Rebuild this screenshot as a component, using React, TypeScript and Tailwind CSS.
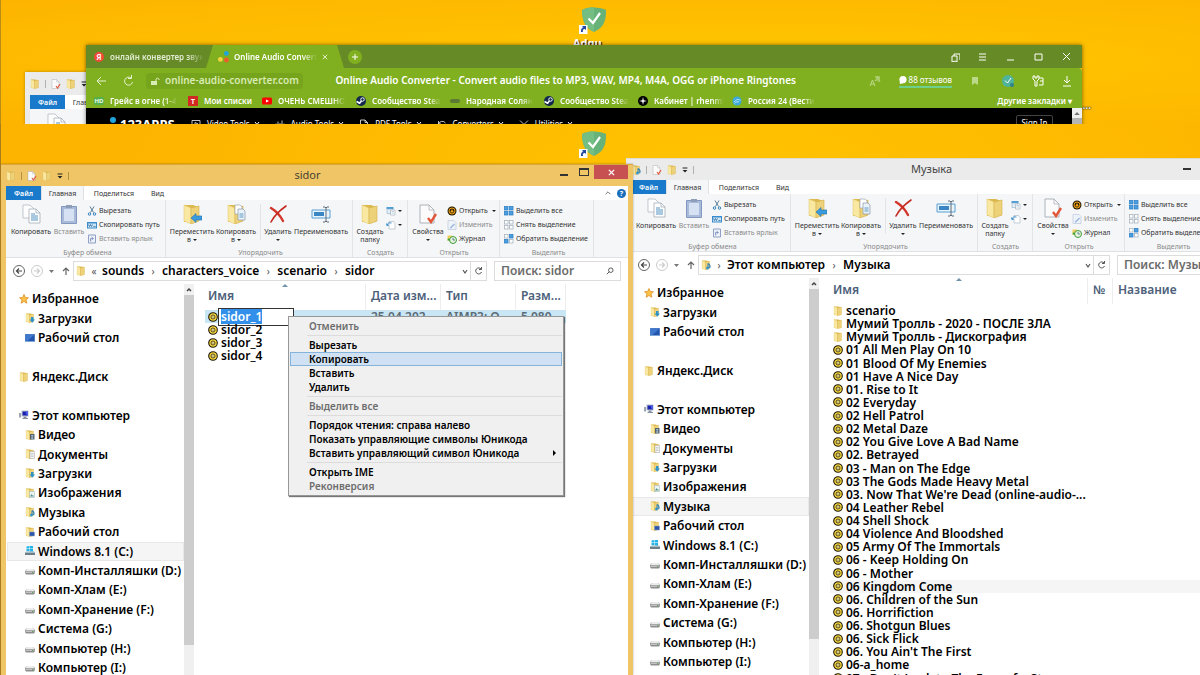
import type { ReactNode } from "react";
import clsx from "clsx";

/* ---------- Icons ---------- */

function Folder({ className = "size-2.5", children }: { className?: string; children?: ReactNode }) {
  return (
    <svg viewBox="0 0 20 20" className={clsx("shrink-0", className)}>
      <path d="M2 1h9l5 2v15H2z" fill="#dcb94f" />
      <path d="M2 1l7 3v16l-7-3z" fill="#f8e8a2" stroke="#e2c567" strokeWidth=".5" />
      <path d="M9 4l8-2v15l-8 3z" fill="#eed27a" stroke="#d3ae45" strokeWidth=".6" />
      {children}
    </svg>
  );
}

function FolderDown() {
  return (
    <Folder>
      <path d="M12 8h5v5h3l-5.500 6.500L9 13h3z" fill="#2f93c8" />
    </Folder>
  );
}

function FolderVideo() {
  return (
    <Folder>
      <path d="M10 8h9v11h-9z" fill="#50616d" />
      <path d="M12.500 10h4v3h-4zM12.500 14.500h4v3h-4z" fill="#a9c8d8" />
    </Folder>
  );
}

function FolderDoc() {
  return (
    <Folder>
      <path d="M10 5h9v14h-9z" fill="#f6f6f6" stroke="#a3a3a3" />
      <path d="M12 9h5M12 12h5M12 15h5" stroke="#9aa4ad" />
    </Folder>
  );
}

function FolderImage() {
  return (
    <Folder>
      <path d="M9 7h10v12H9z" fill="#eaf4f6" stroke="#9eb0b5" />
      <path d="M10 17l3-5 2 3 1-1 2 3z" fill="#5a9a8b" />
    </Folder>
  );
}

function FolderMusic({ className }: { className?: string }) {
  return (
    <Folder className={className}>
      <path d="M14 7c4 2 5 6 3 9" stroke="#2a7fb5" strokeWidth="2.500" fill="none" />
      <circle cx="13" cy="16" r="3" fill="#3b9bd0" />
      <path d="M13 7h2v9h-2z" fill="#2a7fb5" />
    </Folder>
  );
}

function FolderDesktop() {
  return (
    <Folder>
      <path d="M9 10h10v8H9z" fill="#2c57a8" stroke="#8aa3cf" />
    </Folder>
  );
}

function Star() {
  return (
    <svg viewBox="0 0 20 20" className="size-2.5 shrink-0">
      <path
        d="M10 1l2.700 6 6.300.6-4.800 4.300 1.500 6.600L10 15l-5.700 3.500 1.500-6.600L1 7.600 7.300 7z"
        fill="#fbc24a"
        stroke="#dd8a1e"
        strokeWidth="1.500"
      />
    </svg>
  );
}

function Screen() {
  return (
    <svg viewBox="0 0 20 20" className="size-2.5 shrink-0">
      <path d="M0 2h20v16H0z" fill="#7fa4d6" />
      <path d="M1 3h18v13H1z" fill="#2355ae" />
      <path d="M1 3h18L5 16H1z" fill="#3f78cc" />
    </svg>
  );
}

function Computer() {
  return (
    <svg viewBox="0 0 20 20" className="size-2.5 shrink-0">
      <path d="M0 6h4v9H0z" fill="#9ca5b0" />
      <path d="M5 1h14v12H5z" fill="#b6bfcc" />
      <path d="M7 3h11v8H7z" fill="#1a23b0" />
      <path d="M13 3h5v8h-2z" fill="#4e63e6" />
      <path d="M9 13h6v3h3v2H7v-2h2z" fill="#8790a0" />
    </svg>
  );
}

function Drive() {
  return (
    <svg viewBox="0 0 20 20" className="size-2.5 shrink-0">
      <path d="M4 8h12l4 4v4l-2 3H2l-2-3v-4z" fill="#8e8e8e" />
      <path d="M4 8h12l3 4H1z" fill="#ececec" />
      <path d="M1 13h18v3H1z" fill="#c2c2c2" />
      <path d="M14 14h3v1.500h-3z" fill="#4a9a4a" />
    </svg>
  );
}

function WindowsDrive() {
  return (
    <svg viewBox="0 0 20 20" className="size-2.5 shrink-0">
      <path d="M3 1l6-1v5H3zM10 0l6-1v6h-6zM3 6h6v5l-6-1zM10 6h6v6l-6-1z" fill="#22b4e8" />
      <path d="M0 13h20v5H0z" fill="#6c7f88" />
      <path d="M2 11h16l2 3H0z" fill="#a9bcc4" />
    </svg>
  );
}

function Disc() {
  return (
    <svg viewBox="0 0 10 10" className="size-2.5 shrink-0">
      <circle cx="5" cy="5" r="4.300" fill="#f5d63c" stroke="#1f1a08" strokeWidth="1.100" />
      <circle cx="5" cy="5" r="2" fill="#fbf0a0" stroke="#3d320a" strokeWidth=".9" />
      <circle cx="5" cy="5" r=".6" fill="#3d320a" />
    </svg>
  );
}

function CopyIcon({ className = "size-5" }: { className?: string }) {
  return (
    <svg viewBox="0 0 20 20" className={className} strokeWidth=".7">
      <path d="M2 1h7l4 4v9H2z" fill="#fdfdfd" stroke="#aab2bb" />
      <path d="M8 5h7l4 4v10H8z" fill="#fff" stroke="#98a3af" />
      <path d="M10 9h4v2h3v6h-7z" fill="#a8c9df" />
      <path d="M15 5v4h4" fill="none" stroke="#98a3af" />
    </svg>
  );
}

function PasteIcon() {
  return (
    <svg viewBox="0 0 20 20" className="size-5">
      <path d="M2.500 2.500h15v17h-15z" fill="#a9bbd9" stroke="#8398c0" />
      <path d="M5 5h10v12H5z" fill="#d6e2f3" />
      <path d="M7 1h6v3H7z" fill="#8e9db8" />
    </svg>
  );
}

function MoveIcon() {
  return (
    <Folder className="size-5">
      <path d="M9 14l5-4.500V12h6v4h-6v2.500z" fill="#3b9bdc" stroke="#2272ae" strokeWidth=".6" />
    </Folder>
  );
}

function CopyToIcon() {
  return (
    <Folder className="size-5">
      <path d="M9 1h5l2 2v7H9z" fill="#fff" stroke="#9ba6b2" strokeWidth=".7" />
      <path d="M12 5h5l2 2v9h-7z" fill="#eaf3fa" stroke="#8796a6" strokeWidth=".7" />
      <path d="M13.500 9h4v5h-4z" fill="#a4c6de" />
    </Folder>
  );
}

function DeleteIcon() {
  return (
    <svg viewBox="0 0 20 20" className="size-5" fill="none" strokeLinecap="round">
      <path d="M3 4c5 3 9 7 12 13" stroke="#d2362b" strokeWidth="2.400" />
      <path d="M18 2C11 7 6 12 3 18" stroke="#c32a20" strokeWidth="1.600" />
    </svg>
  );
}

function RenameIcon() {
  return (
    <svg viewBox="0 0 20 20" className="size-5" fill="none">
      <path d="M1 6h18v8H1z" fill="#eaf4fb" stroke="#58a0d4" />
      <path d="M3 8h10v4H3z" fill="#3a86c4" />
      <path d="M12 3h2l1 1 1-1h2M15 4v13M12 18h2l1-1 1 1h2" stroke="#5f6b76" />
    </svg>
  );
}

function PropertiesIcon({ className = "size-5" }: { className?: string }) {
  return (
    <svg viewBox="0 0 20 20" className={className}>
      <path d="M2 1h9l5 5v13H2z" fill="#fbfbfb" stroke="#9aa1a9" strokeWidth=".8" />
      <path d="M11 1v5h5" fill="none" stroke="#adb3ba" strokeWidth=".8" />
      <path d="M10 14l3 4 5-8" fill="none" stroke="#e0573a" strokeWidth="2.400" />
    </svg>
  );
}

function Scissors() {
  return (
    <svg viewBox="0 0 20 20" className="size-2.5" fill="none" stroke="#2f83bd" strokeWidth="2">
      <path d="M6 1l7 12M14 1L7 13" stroke="#5d7e96" />
      <circle cx="5" cy="16" r="2.500" />
      <circle cx="15" cy="16" r="2.500" />
    </svg>
  );
}

function PathIcon() {
  return (
    <svg viewBox="0 0 20 20" className="size-2.5">
      <path d="M0 4h20v13H0z" fill="#3a8ccd" />
      <path d="M2 7h16v8H2z" fill="#cfe6f7" />
      <path d="M3 9l2 4 2-4 2 4 2-4M13 13h4" stroke="#1f6099" strokeWidth="1.500" fill="none" />
    </svg>
  );
}

function ShortcutIcon() {
  return (
    <svg viewBox="0 0 20 20" className="size-2.5">
      <path d="M3 2h14v16H3z" fill="#eef2f8" stroke="#8fa0c4" strokeWidth="2" />
      <path d="M7 15V9h5M9 6l4 3-4 3" fill="none" stroke="#6d84b8" strokeWidth="1.500" />
    </svg>
  );
}

function NewItemIcon() {
  return (
    <svg viewBox="0 0 20 20" className="size-2.5">
      <path d="M1 2h14v4H1z" fill="#4d9fd6" />
      <path d="M2 6h12v9H2z" fill="#e3eef6" stroke="#7fa6c2" />
      <path d="M9 8h9v10H9z" fill="#fff" stroke="#8b9aa8" />
      <path d="M11 11h5M11 14h5" stroke="#7fa6c2" />
    </svg>
  );
}

function EasyAccessIcon() {
  return (
    <svg viewBox="0 0 20 20" className="size-2.5">
      <path d="M6 3h9l3 4v11H6z" fill="#fff" stroke="#93a1ae" />
      <path d="M2 11c0-5 5-6 9-5M2 11l-1-4M2 11l4-1" fill="none" stroke="#3b8fce" strokeWidth="2" />
    </svg>
  );
}

function OpenIcon() {
  return (
    <svg viewBox="0 0 20 20" className="size-2.5">
      <circle cx="10" cy="10" r="9" fill="#2d2005" />
      <circle cx="10" cy="10" r="6" fill="none" stroke="#f0a21a" strokeWidth="2" />
      <path d="M10 6l4 7H6z" fill="#f0a21a" />
    </svg>
  );
}

function EditIcon() {
  return (
    <svg viewBox="0 0 20 20" className="size-2.5">
      <path d="M2 1h12l4 4v14H2z" fill="#eef3fa" stroke="#a6b6d2" />
      <path d="M6 15l8-8 2 2-8 8H6z" fill="#9ab4dc" />
    </svg>
  );
}

function HistoryIcon() {
  return (
    <svg viewBox="0 0 20 20" className="size-2.5">
      <path d="M1 3h9v10H1z" fill="#f0cf5c" />
      <circle cx="12" cy="12" r="7" fill="#e7f4df" stroke="#3f9b3a" strokeWidth="2" />
      <path d="M12 8v4h4" stroke="#35607c" strokeWidth="1.500" fill="none" />
      <path d="M2 8l5 5H1z" fill="#3fa535" />
    </svg>
  );
}

function SelectIcon({ kind }: { kind: "all" | "none" | "invert" }) {
  const on = "fill-[#4a9fe0] stroke-[#2d7fc3]";
  const off = "fill-white stroke-[#a4b1bd]";
  const [a, b, c, d] = { all: [on, on, on, on], none: [off, off, off, off], invert: [off, on, on, off] }[kind];
  return (
    <svg viewBox="0 0 20 20" className="size-2.5" strokeWidth="1.500">
      <rect x="1" y="1" width="7" height="7" className={a} />
      <rect x="11" y="1" width="7" height="7" className={b} />
      <rect x="1" y="11" width="7" height="7" className={c} />
      <rect x="11" y="11" width="7" height="7" className={d} />
    </svg>
  );
}

function Caret() {
  return (
    <svg viewBox="0 0 8 4" className="inline-block h-0.5 w-1 shrink-0">
      <path d="M0 0h8L4 4z" fill="#222" />
    </svg>
  );
}

function AdguardIcon() {
  return (
    <svg viewBox="0 0 28 28" className="size-7">
      <path d="M3 3c4-2 7-2.500 12-2.500S24 1.500 27 3c.5 11-3 18-12 22C6 21 3 13 3 3z" fill="#67b279" />
      <path d="M3 3c4-2 7-2.500 12-2.500V25C6 21 3 13 3 3z" fill="#74bd83" />
      <path d="M9.500 11.500l4.500 4.500 7-10" fill="none" stroke="#fff" strokeWidth="2.200" />
      <path d="M0 18h8.500v9H0z" fill="#fff" />
      <path d="M2 25c-.5-3 1-4.500 3-4.500H3.500V19H7v4l-1.200-1C4 22 3.500 23 4 25z" fill="#234a9c" />
    </svg>
  );
}

/* ---------- Explorer ---------- */

type NavItem = { icon: ReactNode; label: string; root?: boolean; spaced?: boolean };

const navItems: NavItem[] = [
  { icon: <Star />, label: "Избранное", root: true },
  { icon: <FolderDown />, label: "Загрузки" },
  { icon: <Screen />, label: "Рабочий стол" },
  { icon: <Folder />, label: "Яндекс.Диск", root: true, spaced: true },
  { icon: <Computer />, label: "Этот компьютер", root: true, spaced: true },
  { icon: <FolderVideo />, label: "Видео" },
  { icon: <FolderDoc />, label: "Документы" },
  { icon: <FolderDown />, label: "Загрузки" },
  { icon: <FolderImage />, label: "Изображения" },
  { icon: <FolderMusic />, label: "Музыка" },
  { icon: <FolderDesktop />, label: "Рабочий стол" },
  { icon: <WindowsDrive />, label: "Windows 8.1 (C:)" },
  { icon: <Drive />, label: "Комп-Инсталляшки (D:)" },
  { icon: <Drive />, label: "Комп-Хлам (E:)" },
  { icon: <Drive />, label: "Комп-Хранение (F:)" },
  { icon: <Drive />, label: "Система (G:)" },
  { icon: <Drive />, label: "Компьютер (H:)" },
  { icon: <Drive />, label: "Компьютер (I:)" },
];

function QuickAccess({ icon }: { icon: ReactNode }) {
  return (
    <div className="flex shrink-0 items-center gap-[5px]">
      {icon}
      <span className="h-2 w-px bg-black/25" />
      <PropertiesIcon className="size-2.5" />
      <Folder />
      <svg viewBox="0 0 10 10" className="size-1.5">
        <path d="M1 1h8v1.500H1zM1 5h8L5 9z" fill="#222" />
      </svg>
      <span className="h-2 w-px bg-black/25" />
    </div>
  );
}

function BigButton({
  icon,
  label,
  second,
  caret,
  disabled,
  width,
}: {
  icon: ReactNode;
  label: string;
  second?: string;
  caret?: boolean;
  disabled?: boolean;
  width: string;
}) {
  return (
    <button
      disabled={disabled}
      className={clsx(
        "flex flex-col items-center text-[7px] leading-2 whitespace-nowrap",
        width,
        disabled ? "text-[#8b8b8b]" : "text-[#333]",
      )}
    >
      {icon}
      <span className="mt-1">{label}</span>
      {(second || caret) && (
        <span className="flex h-2 items-center gap-0.5">
          {second}
          {caret && <Caret />}
        </span>
      )}
    </button>
  );
}

function SmallButton({ icon, label, caret, disabled }: { icon: ReactNode; label: string; caret?: boolean; disabled?: boolean }) {
  return (
    <button
      disabled={disabled}
      className={clsx("flex h-3.5 items-center gap-0.5 text-[7px] whitespace-nowrap", disabled ? "text-[#8b8b8b]" : "text-[#333]")}
    >
      {icon}
      {label}
      {caret && <span className="ml-0.5 flex"><Caret /></span>}
    </button>
  );
}

function RibbonGroup({ label, className, children }: { label: string; className: string; children: ReactNode }) {
  return (
    <section className={clsx("flex shrink-0 flex-col border-r border-[#e2e4e7] pt-1", className)}>
      <div className="flex flex-1 items-start">{children}</div>
      <h3 className="text-center text-[7px] leading-2 text-[#8a8a8a]">{label}</h3>
    </section>
  );
}

function Ribbon() {
  return (
    <div className="flex h-[58px] shrink-0 border-b border-[#dfe1e4] bg-[#f5f6f8]">
      <RibbonGroup label="Буфер обмена" className="w-[160px] pl-1">
        <BigButton icon={<CopyIcon />} label="Копировать" width="w-[42px]" />
        <BigButton icon={<PasteIcon />} label="Вставить" width="w-[34px]" disabled />
        <div className="ml-px">
          <SmallButton icon={<Scissors />} label="Вырезать" />
          <SmallButton icon={<PathIcon />} label="Скопировать путь" />
          <SmallButton icon={<ShortcutIcon />} label="Вставить ярлык" disabled />
        </div>
      </RibbonGroup>
      <RibbonGroup label="Упорядочить" className="w-[187px] pl-[3px]">
        <BigButton icon={<MoveIcon />} label="Переместить" second="в" width="w-[46px]" caret />
        <BigButton icon={<CopyToIcon />} label="Копировать" second="в" width="w-[42px]" caret />
        <span className="mx-[3px] h-9 w-px bg-[#e2e4e7]" />
        <BigButton icon={<DeleteIcon />} label="Удалить" width="w-[28px]" caret />
        <BigButton icon={<RenameIcon />} label="Переименовать" width="w-[58px]" />
      </RibbonGroup>
      <RibbonGroup label="Создать" className="w-[55px] pl-px">
        <BigButton icon={<Folder className="size-5" />} label="Создать" second="папку" width="w-[32px]" />
        <div>
          <button aria-label="Создать элемент" className="flex h-3.5 items-center gap-0.5">
            <NewItemIcon />
            <Caret />
          </button>
          <button aria-label="Простой доступ" className="flex h-3.5 items-center gap-0.5">
            <EasyAccessIcon />
            <Caret />
          </button>
        </div>
      </RibbonGroup>
      <RibbonGroup label="Открыть" className="w-[92px] pl-px">
        <BigButton icon={<PropertiesIcon />} label="Свойства" width="w-[38px]" caret />
        <div>
          <SmallButton icon={<OpenIcon />} label="Открыть" caret />
          <SmallButton icon={<EditIcon />} label="Изменить" disabled />
          <SmallButton icon={<HistoryIcon />} label="Журнал" />
        </div>
      </RibbonGroup>
      <RibbonGroup label="Выделить" className="w-[94px] pl-1">
        <div>
          <SmallButton icon={<SelectIcon kind="all" />} label="Выделить все" />
          <SmallButton icon={<SelectIcon kind="none" />} label="Снять выделение" />
          <SmallButton icon={<SelectIcon kind="invert" />} label="Обратить выделение" />
        </div>
      </RibbonGroup>
    </div>
  );
}

function RibbonTabs() {
  return (
    <nav className="flex h-3.5 shrink-0 items-stretch bg-white text-[7px] text-[#333]">
      <button className="w-[35px] bg-[#1979ca] pt-0.5 font-semibold text-white">Файл</button>
      <button className="w-[43px] border-x border-[#dfe1e4] bg-[#f5f6f8] pt-0.5">Главная</button>
      <button className="w-[60px] pt-0.5">Поделиться</button>
      <button className="w-[27px] pt-0.5">Вид</button>
      <div className="ml-auto flex items-center gap-1.5 pr-0.5">
        <svg viewBox="0 0 10 10" className="size-1.5" fill="none" stroke="#666" strokeWidth="1.500">
          <path d="M1 7l4-4 4 4" />
        </svg>
        <button aria-label="Справка" className="size-[9px] rounded-full bg-[#1c6fbd] text-[7px] leading-[9px] font-bold text-white">
          ?
        </button>
      </div>
    </nav>
  );
}

function AddressBar({ icon, prefix, path, search }: { icon: ReactNode; prefix: string; path: string[]; search: string }) {
  return (
    <div className="flex h-[26px] shrink-0 items-center bg-white pl-1.5">
      <svg viewBox="0 0 60 14" className="h-3.5 w-[60px] shrink-0" fill="none">
        <circle cx="7" cy="7" r="5.500" stroke="#666" />
        <path d="M10 7H4.500M7 4.500L4.500 7 7 9.500" stroke="#444" strokeWidth="1.200" />
        <circle cx="25" cy="7" r="5.500" stroke="#ccc" />
        <path d="M22 7h5.500M25 4.500L27.500 7 25 9.500" stroke="#ccc" strokeWidth="1.200" />
        <path d="M37 6h5l-2.500 3z" fill="#777" />
        <path d="M54 11V4M51 7l3-3 3 3" stroke="#666" strokeWidth="1.200" />
      </svg>
      <div className="ml-px flex h-5 min-w-0 flex-1 items-center border border-[#dcdcdc] pl-0.5 text-[12px] font-semibold">
        {icon}
        <span className="w-4 text-center text-[10px] font-normal text-[#555]">{prefix}</span>
        {path.map((part, i) => (
          <span key={part} className="flex items-center">
            {i > 0 && <span className="w-[18px] text-center text-[10px] font-normal text-[#555]">›</span>}
            <button>{part}</button>
          </span>
        ))}
        <svg viewBox="0 0 24 18" className="ml-auto h-[18px] w-6" fill="none" stroke="#555">
          <path d="M1 8l2 3 2-3" strokeWidth="1.200" />
          <path d="M8.500 0v18" stroke="#dcdcdc" />
          <path d="M19 7a3 3 0 1 0 .5 3M19.500 5v2.500H17" />
        </svg>
      </div>
      <label className="mx-[7px] flex h-5 w-[127px] shrink-0 items-center border border-[#dcdcdc] px-1.5">
        <input placeholder={search} className="w-full min-w-0 text-[12px] font-semibold outline-none placeholder:text-[#6b6b6b]" />
        <svg viewBox="0 0 10 10" className="size-2 shrink-0" fill="none" stroke="#555" strokeWidth="1.200">
          <circle cx="6" cy="4" r="2.800" />
          <path d="M4 6L1 9" />
        </svg>
      </label>
    </div>
  );
}

function NavPane({ hovered }: { hovered: string }) {
  return (
    <aside className="flex w-[188px] shrink-0 overflow-hidden">
      <ul className="grid h-[393px] flex-1 auto-rows-fr pt-[5px] pl-px">
        {navItems.map((item, i) => (
          <li key={i} className={clsx("flex items-end", item.spaced && "row-span-2")}>
            <a
              href="#"
              className={clsx(
                "flex w-full items-center gap-[3px] border text-[12px] leading-[17px] font-semibold whitespace-nowrap",
                item.root ? "pl-[11px]" : "pl-[17px]",
                item.label === hovered ? "border-[#e8e8e8] bg-[#f5f5f5]" : "border-transparent",
              )}
            >
              {item.icon}
              {item.label}
            </a>
          </li>
        ))}
      </ul>
      <div className="flex w-2.5 shrink-0 flex-col bg-[#f0f0f0] pt-px">
        <svg viewBox="0 0 10 10" className="size-2.5" fill="none" stroke="#444" strokeWidth="1.500">
          <path d="M3 6l2-2 2 2" />
        </svg>
        <div className="h-[350px] bg-[#cdcdcd]" />
      </div>
    </aside>
  );
}

function ExplorerWindow({
  title,
  active,
  className,
  icon,
  prefix,
  path,
  search,
  hovered,
  children,
}: {
  title: string;
  active?: boolean;
  className: string;
  icon: ReactNode;
  prefix: string;
  path: string[];
  search: string;
  hovered: string;
  children: ReactNode;
}) {
  return (
    <article
      className={clsx(
        "absolute bottom-0 flex flex-col px-[5px]",
        active ? "border-t border-[#d9a83c] bg-[#efc565] shadow-[0_0_2px_#0005]" : "border-t border-[#e0dccc] bg-[#ebebeb]",
        className,
      )}
    >
      <header className="flex h-[21px] shrink-0 items-center">
        <QuickAccess icon={icon} />
        <h2 className={clsx("flex-1 pr-2 text-center text-[11px]", active ? "text-[#4a4232]" : "text-[#444]")}>{title}</h2>
        <div className="flex self-start">
          <button aria-label="Свернуть" className="flex h-3.5 w-5 items-end justify-center pb-[3px]">
            <span className="h-0.5 w-2 bg-[#333]" />
          </button>
          <button aria-label="Развернуть" className="flex h-3.5 w-5 items-center justify-center">
            <span className="h-2 w-2.5 border border-t-2 border-[#333]" />
          </button>
          <button
            aria-label="Закрыть"
            className={clsx("flex h-3.5 w-[34px] items-center justify-center", active && "bg-[#c75050]")}
          >
            <svg viewBox="0 0 8 8" className="size-[7px]" stroke={active ? "#fff" : "#333"} strokeWidth="1.500">
              <path d="M1 1l6 6M7 1L1 7" />
            </svg>
          </button>
        </div>
      </header>
      <RibbonTabs />
      <Ribbon />
      <AddressBar icon={icon} prefix={prefix} path={path} search={search} />
      <div className="flex min-h-0 flex-1 overflow-hidden bg-white">
        <NavPane hovered={hovered} />
        <div className="min-w-0 flex-1 overflow-hidden pl-[11px]">{children}</div>
      </div>
    </article>
  );
}

function HeaderCell({ children, sorted }: { children?: ReactNode; sorted?: boolean }) {
  return (
    <th className="relative h-[26px] border-r border-[#ededed] pb-[3px] pl-[5px] text-left font-semibold text-[#4c607a] first:pl-[3px]">
      {children}
      {sorted && (
        <svg viewBox="0 0 6 4" className="absolute top-0 left-1/2 h-1 w-1.5 -translate-x-1/2">
          <path d="M3 0l3 3H0z" fill="#6f93ad" />
        </svg>
      )}
    </th>
  );
}

const sidorFiles = ["sidor_2", "sidor_3", "sidor_4"];

function SidorFiles() {
  return (
    <table className="w-[361px] table-fixed border-separate border-spacing-0 text-[12px] leading-[13px] font-semibold whitespace-nowrap">
      <colgroup>
        <col className="w-[161px]" />
        <col className="w-[75px]" />
        <col className="w-[75px]" />
        <col className="w-[50px]" />
      </colgroup>
      <thead>
        <tr>
          <HeaderCell sorted>Имя</HeaderCell>
          <HeaderCell>Дата изм...</HeaderCell>
          <HeaderCell>Тип</HeaderCell>
          <HeaderCell>Разм...</HeaderCell>
        </tr>
      </thead>
      <tbody>
        <tr className="bg-[#c9e6f5] text-[#5c6b75]">
          <td className="h-[13px] p-0">
            <div className="flex h-[13px] items-center pl-[3px]">
              <Disc />
              <label className="-my-1 flex h-[18px] w-[76px] items-center border border-[#333] bg-white pl-0.5">
                <input
                  aria-label="Имя файла"
                  defaultValue="sidor_1"
                  className="field-sizing-content h-[15px] bg-[#3390ea] text-white outline-none"
                />
              </label>
            </div>
          </td>
          <td className="p-0 pl-[5px]">25.04.202...</td>
          <td className="p-0 pl-[5px]">AIMP3: O...</td>
          <td className="p-0 pl-[5px]">5 080</td>
        </tr>
        {sidorFiles.map((name) => (
          <tr key={name}>
            <td className="p-0">
              <div className="flex h-[13px] items-center gap-[3px] pl-[3px]">
                <Disc />
                {name}
              </div>
            </td>
            <td />
            <td />
            <td />
          </tr>
        ))}
      </tbody>
    </table>
  );
}

const musicFolders = ["scenario", "Мумий Тролль - 2020 - ПОСЛЕ ЗЛА", "Мумий Тролль - Дискография"];

const tracks = [
  "01 All Men Play On 10",
  "01 Blood Of My Enemies",
  "01 Have A Nice Day",
  "01. Rise to It",
  "02 Everyday",
  "02 Hell Patrol",
  "02 Metal Daze",
  "02 You Give Love A Bad Name",
  "02. Betrayed",
  "03 - Man on The Edge",
  "03 The Gods Made Heavy Metal",
  "03. Now That We're Dead (online-audio-...",
  "04 Leather Rebel",
  "04 Shell Shock",
  "04 Violence And Bloodshed",
  "05 Army Of The Immortals",
  "06 - Keep Holding On",
  "06 - Mother",
  "06 Kingdom Come",
  "06. Children of the Sun",
  "06. Horrifiction",
  "06. Shotgun Blues",
  "06. Sick Flick",
  "06. You Ain't The First",
  "06-a_home",
  "07 - Don't Look to The Eyes of a Str...",
];

function MusicFiles() {
  return (
    <table className="h-[407px] w-full table-fixed border-separate border-spacing-0 text-[12px] leading-[13px] font-semibold whitespace-nowrap">
      <colgroup>
        <col className="w-[258px]" />
        <col className="w-[25px]" />
        <col />
      </colgroup>
      <thead>
        <tr className="h-[26px]">
          <HeaderCell sorted>Имя</HeaderCell>
          <HeaderCell>№</HeaderCell>
          <HeaderCell>Название</HeaderCell>
        </tr>
      </thead>
      <tbody>
        {[...musicFolders, ...tracks].map((name) => (
          <tr key={name} className={clsx(name === "06 Kingdom Come" && "bg-[#f5f5f5]")}>
            <td className="p-0">
              <div className="flex items-center gap-[3px] pl-[3px]">
                {musicFolders.includes(name) ? <Folder /> : <Disc />}
                {name}
              </div>
            </td>
            <td className="p-0" />
            <td className="p-0" />
          </tr>
        ))}
      </tbody>
    </table>
  );
}

const menuGroups: { label: string; disabled?: boolean; submenu?: boolean }[][] = [
  [{ label: "Отменить", disabled: true }],
  [{ label: "Вырезать" }, { label: "Копировать" }, { label: "Вставить" }, { label: "Удалить" }],
  [{ label: "Выделить все", disabled: true }],
  [
    { label: "Порядок чтения: справа налево" },
    { label: "Показать управляющие символы Юникода" },
    { label: "Вставить управляющий символ Юникода", submenu: true },
  ],
  [{ label: "Открыть IME" }, { label: "Реконверсия", disabled: true }],
];

function ContextMenu() {
  return (
    <div
      role="menu"
      className="absolute top-[192px] left-[287px] w-[276px] border border-[#979797] bg-[#f0f0f0] px-px py-0.5 text-[10px] font-semibold shadow-[1px_1px_1px_#0008]"
    >
      {menuGroups.map((group, i) => (
        <div key={i}>
          {i > 0 && <div className="my-0.5 ml-[17px] h-px bg-[#dcdcdc]" />}
          {group.map((item) => (
            <button
              key={item.label}
              role="menuitem"
              disabled={item.disabled}
              className={clsx(
                "flex h-3.5 w-full items-center justify-between border pr-1 pl-[18px]",
                item.label === "Копировать" ? "border-[#84b4dc] bg-[#cfe1f2]" : "border-transparent",
                item.disabled && "text-[#6d6d6d]",
              )}
            >
              {item.label}
              {item.submenu && (
                <svg viewBox="0 0 4 6" className="h-1.5 w-1">
                  <path d="M0 0l3 3-3 3z" />
                </svg>
              )}
            </button>
          ))}
        </div>
      ))}
    </div>
  );
}

/* ---------- Browser ---------- */

const fade = "overflow-hidden whitespace-nowrap [mask-image:linear-gradient(to_right,#000_82%,transparent)]";

function SteamIcon() {
  return (
    <svg viewBox="0 0 20 20" className="size-2.5 shrink-0">
      <circle cx="10" cy="10" r="10" fill="#12294d" />
      <circle cx="13" cy="7" r="3.500" fill="none" stroke="#fff" strokeWidth="2" />
      <path d="M1 11l6 3 4-4" stroke="#fff" strokeWidth="3" fill="none" />
      <circle cx="7" cy="14" r="2" fill="#fff" />
    </svg>
  );
}

const bookmarks: { label: string; width: string; icon: ReactNode }[] = [
  {
    label: "Грейс в огне (1-4",
    width: "w-[94px]",
    icon: <span className="w-2.5 rounded-xs bg-[#55b04a] text-center text-[6px] leading-2 text-white">HD</span>,
  },
  {
    label: "Мои списки",
    width: "w-[74px]",
    icon: <span className="size-2.5 bg-[#d02a22] text-center text-[8px] leading-2.5 text-white">т</span>,
  },
  {
    label: "ОЧЕНЬ СМЕШНО",
    width: "w-[94px]",
    icon: (
      <svg viewBox="0 0 20 20" className="size-2.5 shrink-0">
        <rect y="3" width="20" height="14" rx="3" fill="#f00" />
        <path d="M8 7l6 3-6 3z" fill="#fff" />
      </svg>
    ),
  },
  { label: "Сообщество Stea", width: "w-[94px]", icon: <SteamIcon /> },
  {
    label: "Народная Солян",
    width: "w-[94px]",
    icon: <span className="h-1 w-2.5 rounded-full bg-[#5c7a33]" />,
  },
  { label: "Сообщество Stea", width: "w-[94px]", icon: <SteamIcon /> },
  {
    label: "Кабинет | rhenml",
    width: "w-[94px]",
    icon: (
      <svg viewBox="0 0 20 20" className="size-2.5 shrink-0">
        <circle cx="10" cy="10" r="10" fill="#000" />
        <path d="M10 2l1.500 6.500L18 10l-6.500 1.500L10 18l-1.500-6.500L2 10l6.500-1.500z" fill="#fff" />
      </svg>
    ),
  },
  {
    label: "Россия 24 (Вести",
    width: "w-[94px]",
    icon: (
      <svg viewBox="0 0 20 20" className="size-2.5 shrink-0">
        <circle cx="10" cy="10" r="9" fill="#3da9d8" />
        <path d="M4 12c4-6 10-6 13-3M5 15c3-4 7-4 9-3" stroke="#bfeaf6" strokeWidth="2" fill="none" />
      </svg>
    ),
  },
];

const siteNav: { label: string; icon: string }[] = [
  { label: "Video Tools", icon: "M2 2h16v14H2zM8 6l6 3-6 3z" },
  { label: "Audio Tools", icon: "M2 8v6M6 4v12M10 7v7M14 2v14M18 8v6" },
  { label: "PDF Tools", icon: "M3 1h9l5 5v12H3zM12 1v5h5" },
  { label: "Converters", icon: "M3 3v6h5M3 9a8 8 0 0 1 14-2M17 17v-6M17 11a8 8 0 0 1-8 7" },
  { label: "Utilities", icon: "M2 2l7 7M18 2L7 13M11 11l6 6" },
];

function Browser() {
  return (
    <article className="absolute top-[45px] right-[118px] left-[85px] flex flex-col shadow-[0_0_4px_#0008]">
      {/* Tabs */}
      <header className="flex h-[23px] items-center bg-[#668a26] pl-2 text-[8px] font-semibold text-[#e3ecd3]">
        <button className="flex w-[112px] items-center gap-1.5">
          <span className="size-2.5 shrink-0 rounded-full bg-[#ef4a35] text-[8px] leading-2.5 text-white">Я</span>
          <span className={fade}>онлайн конвертер звук</span>
        </button>
        <div className="flex h-full w-[138px] items-center bg-[#80b020] pr-4 pl-3 text-white [clip-path:polygon(7px_0,131px_0,100%_100%,0_100%)]">
          <svg viewBox="0 0 20 20" className="mr-1 size-3 shrink-0">
            <circle cx="14" cy="4" r="4" fill="#1ea5dc" />
            <circle cx="4" cy="14" r="4" fill="#f4d43c" />
            <circle cx="14" cy="15" r="4" fill="#ef5b2d" />
          </svg>
          <span className={fade}>Online Audio Convert</span>
          <button aria-label="Закрыть вкладку" className="ml-auto">
            <svg viewBox="0 0 8 8" className="size-1.5" stroke="#fff">
              <path d="M1 1l6 6M7 1L1 7" />
            </svg>
          </button>
        </div>
        <button aria-label="Новая вкладка" className="ml-1 size-3.5 rounded-full bg-[#80b020]">
          <svg viewBox="0 0 14 14" stroke="#fff">
            <path d="M7 4v6M4 7h6" />
          </svg>
        </button>
        <div className="ml-auto flex gap-[18px] pr-2.5">
          {[
            ["Панели", "M4 2h6v6M2 4h5v6l-2-1-3 1zM4 4V2"],
            ["Меню", "M1 2h7M1 5h7M1 8h7"],
            ["Свернуть", "M1 8h7"],
            ["Развернуть", "M1 2h7v6H1z"],
            ["Закрыть", "M1 1l7 7M8 1L1 8"],
          ].map(([label, d]) => (
            <button key={label} aria-label={label}>
              <svg viewBox="0 0 10 10" className="size-2.5" fill="none" stroke="#fff">
                <path d={d} />
              </svg>
            </button>
          ))}
        </div>
      </header>

      {/* Address */}
      <div className="flex h-[25px] items-center rounded-tr-sm bg-[#80b020] px-2.5 text-[10px] font-semibold text-white">
        <svg viewBox="0 0 40 12" className="h-3 w-10 shrink-0" fill="none" stroke="#e6f2cf">
          <path d="M10 6H1M5 2L1 6l4 4" />
          <path d="M35 3a4 4 0 1 0 1.500 4M35.500 0v3.500H32" />
        </svg>
        <div className="ml-2.5 flex h-4 items-center gap-[5px] rounded-sm bg-[#76a41c] px-1 text-[#d9ebb4]">
          <svg viewBox="0 0 10 10" className="size-2.5" fill="#d9ebb4">
            <path d="M1 5h6v4H1z" />
            <path d="M6 5V3a2 2 0 0 1 3 0v1" fill="none" stroke="#d9ebb4" />
          </svg>
          online-audio-converter.com
        </div>
        <h1 className="flex-1 pr-10 text-center whitespace-nowrap">
          Online Audio Converter - Convert audio files to MP3, WAV, MP4, M4A, OGG or iPhone Ringtones
        </h1>
        <div className="flex shrink-0 items-center gap-[18px] text-[8px] font-normal">
          <svg viewBox="0 0 12 12" className="size-3" fill="none" stroke="#bcd98a">
            <path d="M1 11l2.500-6L6 11M2 9h3M6 2h5M8 1v5M6 6c2-4 4-2 5 0M10 2v5" />
          </svg>
          <a href="#" className="flex items-center gap-0.5 border-b-2 border-[#6fcf8f]">
            <svg viewBox="0 0 10 10" className="size-2" fill="#fff">
              <circle cx="5" cy="4.500" r="4.500" />
              <path d="M1 6v4l4-1z" />
            </svg>
            88 отзывов
          </a>
          <svg viewBox="0 0 10 10" className="size-2.5" fill="#bcd98a">
            <path d="M2 1h6v8L5 7 2 9z" />
          </svg>
          <svg viewBox="0 0 12 12" className="ml-1 size-3">
            <circle cx="6" cy="6" r="6" fill="#4fb49b" />
            <path d="M3 5.500l2.500 2.500L9 3" stroke="#fff" fill="none" />
            <circle cx="10" cy="10" r="2" fill="#2f7f8e" />
          </svg>
          <svg viewBox="0 0 12 12" className="size-3" fill="none" stroke="#fff">
            <path d="M1 1v3l2 2v5h2V6l2-2V1H5v2H3V1zM7 3h4v7H7M8 6h3" />
          </svg>
          <svg viewBox="0 0 10 12" className="h-3 w-2.5" fill="none" stroke="#fff">
            <path d="M5 1v7M2 5l3 3 3-3M1 11h8" />
          </svg>
        </div>
      </div>

      {/* Bookmarks */}
      <nav className="flex h-[15px] items-center bg-[#80b020] pr-2.5 pl-2 text-[8px] font-semibold text-white">
        {bookmarks.map((b, i) => (
          <a key={i} href="#" className={clsx("flex shrink-0 items-center gap-1.5 pr-2", b.width)}>
            <span className="flex w-2.5 shrink-0 items-center justify-center">{b.icon}</span>
            <span className={b.label === "Мои списки" ? "whitespace-nowrap" : fade}>{b.label}</span>
          </a>
        ))}
        <button className="ml-auto whitespace-nowrap">Другие закладки ▾</button>
      </nav>

      {/* Page */}
      <div className="flex h-[30px] bg-black text-[8px] text-white">
        <div className="flex w-[101px] shrink-0 items-start gap-1 pt-[9px] pl-6">
          <span className="size-1.5 shrink-0 rounded-full bg-[#1ea5dc]" />
          <b className="text-[13px] leading-3.5">123APPS</b>
        </div>
        <nav className="flex gap-[15px] pt-2.5 pl-1">
          {siteNav.map((item) => (
            <a key={item.label} href="#" className="flex h-3 items-center gap-1.5 whitespace-nowrap">
              <svg viewBox="0 0 20 18" className="size-2.5" fill="none" stroke="#fff" strokeWidth="1.500">
                <path d={item.icon} />
              </svg>
              <span className="flex items-center gap-1">
                {item.label}
                <svg viewBox="0 0 6 4" className="h-1 w-1.5" fill="none" stroke="#fff">
                  <path d="M1 0l2 2.500L5 0" />
                </svg>
              </span>
            </a>
          ))}
        </nav>
        <button className="mt-[7px] mr-[19px] ml-auto h-4 w-[37px] rounded-xs border border-[#444]">Sign In</button>
        <div className="flex w-2.5 flex-col items-center bg-[#f0f0f0] pt-1">
          <span className="h-1 w-1.5 bg-[#777] [clip-path:polygon(50%_0,100%_100%,0_100%)]" />
          <span className="mt-[3px] h-6 w-full bg-[#b5b5b5]" />
        </div>
      </div>
    </article>
  );
}

export default function App() {
  return (
    <main className="flex h-screen flex-col overflow-hidden bg-[#fdb900] font-['Noto_Sans','Open_Sans',sans-serif] text-black">
      {/* Desktop behind the browser */}
      <section className="relative h-31 shrink-0 overflow-hidden border-l border-[#b98a1c] bg-[radial-gradient(ellipse_at_60%_50%,#ffc200_30%,#fdb400_100%)]">
        <div className="absolute top-[7px] left-[572px] text-[11px] leading-4 font-bold text-white [text-shadow:1px_1px_1px_#000]">
          <div className="pl-1.5">
            <AdguardIcon />
          </div>
          <p>Adgu</p>
        </div>
        <div className="absolute top-[72px] left-6 w-[90px] bg-[#ebebeb] px-[5px] shadow-[0_0_3px_#0004]">
          <div className="flex h-[23px] items-center">
            <QuickAccess icon={<Folder />} />
          </div>
          <div className="flex h-3.5 bg-white text-[7px] text-[#333]">
            <button className="w-[35px] bg-[#1979ca] pt-0.5 font-semibold text-white">Файл</button>
            <button className="w-[43px] pt-0.5">Главная</button>
          </div>
          <div className="h-10 bg-[#f5f6f8] pt-1 pl-4">
            <CopyIcon />
          </div>
        </div>
        <span className="absolute top-[98px] right-[109px] text-[10px] font-bold text-white [text-shadow:0_0_1px_#000,0_0_2px_#000]">
          ...
        </span>
        <Browser />
      </section>

      {/* Desktop with the two folders */}
      <section className="relative flex-1 overflow-hidden border-l border-[#a87b1f] bg-[radial-gradient(ellipse_at_60%_20%,#ffc200_10%,#fdb400_60%)]">
        <div className="absolute top-[7px] left-[578px]">
          <AdguardIcon />
        </div>
        <ExplorerWindow
          title="Музыка"
          className="top-[34px] -right-14 left-[625px]"
          icon={<FolderMusic />}
          prefix="›"
          path={["Этот компьютер", "Музыка"]}
          search="Поиск: Музыка"
          hovered="Музыка"
        >
          <MusicFiles />
        </ExplorerWindow>
        <ExplorerWindow
          title="sidor"
          active
          className="top-[40px] left-0 w-[632px]"
          icon={<Folder />}
          prefix="«"
          path={["sounds", "characters_voice", "scenario", "sidor"]}
          search="Поиск: sidor"
          hovered="Windows 8.1 (C:)"
        >
          <SidorFiles />
        </ExplorerWindow>
        <ContextMenu />
      </section>
    </main>
  );
}
